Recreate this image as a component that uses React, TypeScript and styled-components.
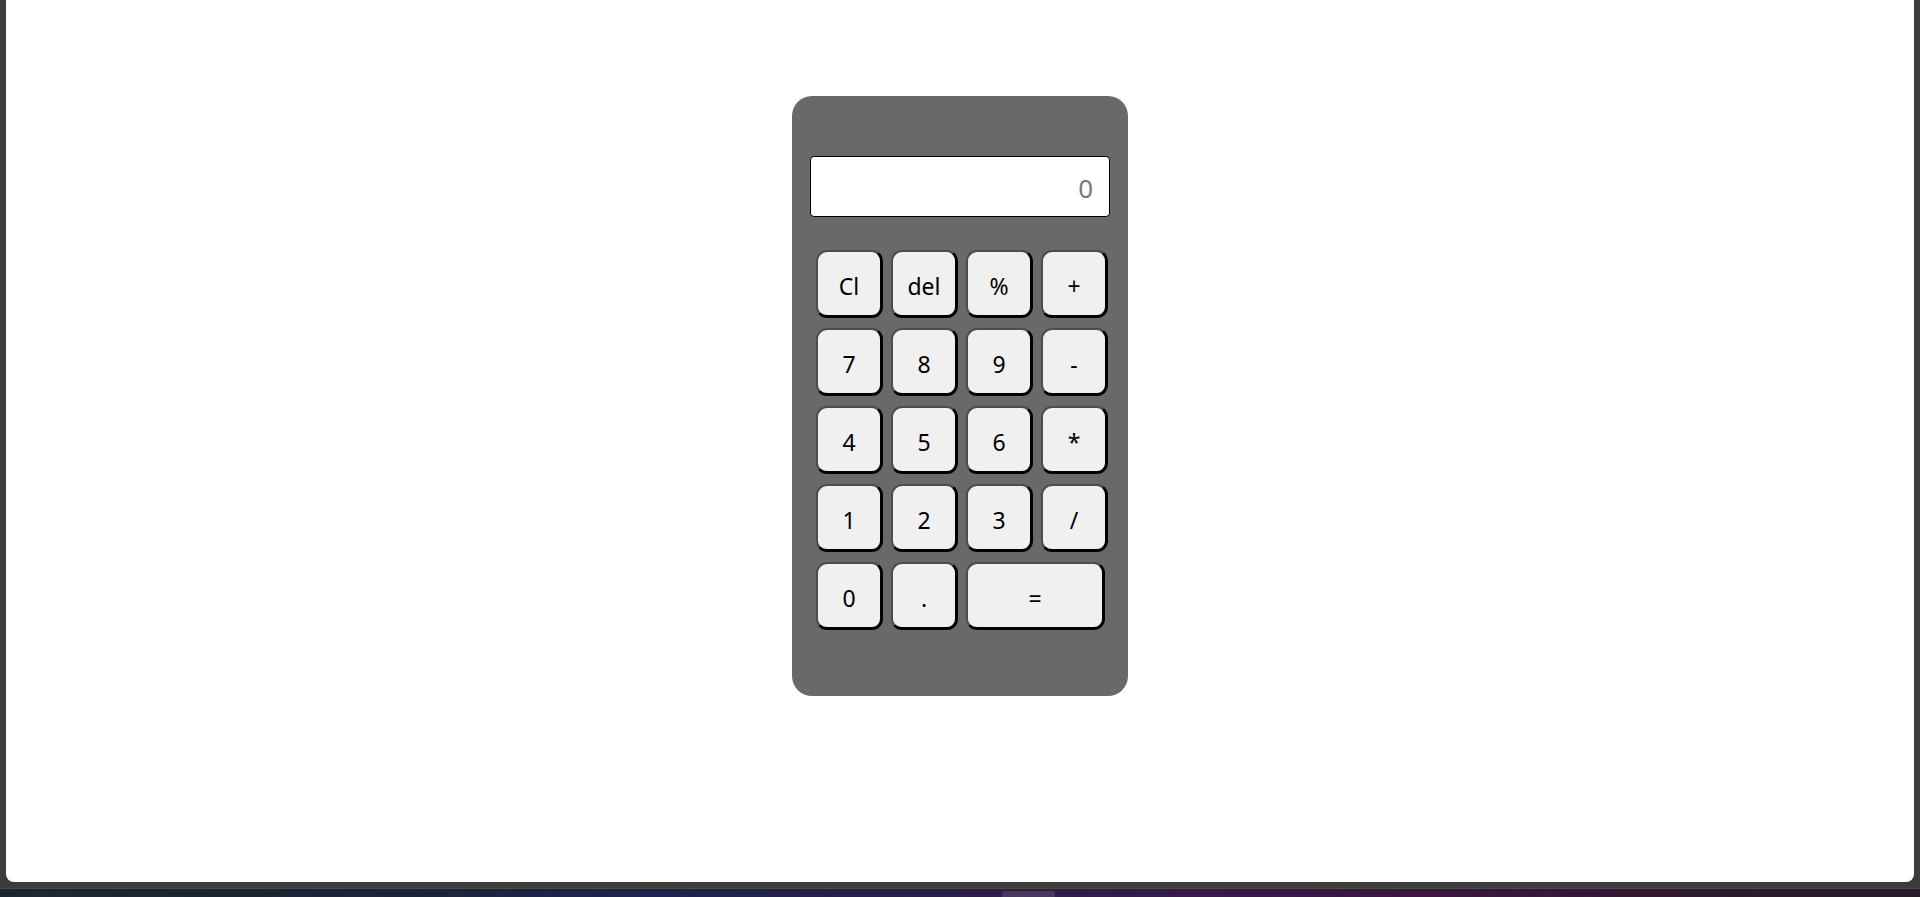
import React from "react";
import styled, { createGlobalStyle } from "styled-components";

const GlobalStyle = createGlobalStyle`
  html, body {
    margin: 0;
    padding: 0;
    background: #3b3b3b;
    overflow: hidden;
  }
  * { box-sizing: border-box; }
`;

const Frame = styled.div`
  width: 1920px;
  height: 897px;
  display: flex;
  flex-direction: column;
  background: #3b3b3b;
`;

const Page = styled.main`
  height: 882px;
  margin: 0 6px;
  background: #ffffff;
  border-radius: 0 0 8px 8px;
  display: flex;
  justify-content: center;
  align-items: flex-start;
  padding-top: 96px;
`;

const Gutter = styled.div`
  height: 7px;
  background: #3c3c3c;
  border-bottom: 1px solid #4a4a4a;
`;

const Taskbar = styled.footer`
  flex: 1;
  display: flex;
  align-items: flex-start;
  padding-left: 1002px;
  background: linear-gradient(
    90deg,
    #1b2730 0%,
    #1b2538 22%,
    #1c2350 34%,
    #2a1f48 48%,
    #361a48 62%,
    #3c1640 74%,
    #2e1a2e 90%,
    #261c26 100%
  );
`;

const TaskItem = styled.div`
  width: 53px;
  height: 6px;
  margin-top: 2px;
  border-radius: 3px 3px 0 0;
  background: rgba(255, 255, 255, 0.12);
`;

const Calculator = styled.div`
  width: 336px;
  background: #696969;
  border-radius: 20px;
  padding: 60px 18px 66px;
  display: flex;
  flex-direction: column;
  gap: 33px;
`;

const Display = styled.input`
  width: 300px;
  height: 61px;
  border: 1px solid #000;
  border-radius: 4px;
  background: #fff;
  text-align: right;
  padding: 3px 16px 0 10px;
  font-family: "Noto Sans", "Open Sans", sans-serif;
  font-size: 26px;
  color: #000;
  outline: none;
  &::placeholder {
    color: #6f7a85;
    opacity: 1;
  }
`;

const Keypad = styled.div`
  display: grid;
  grid-template-columns: repeat(4, 67px);
  grid-auto-rows: 68px;
  column-gap: 8px;
  row-gap: 10px;
  padding-left: 6px;
`;

const Key = styled.button<{ $wide?: boolean }>`
  grid-column: ${(p) => (p.$wide ? "span 2" : "auto")};
  width: ${(p) => (p.$wide ? "139px" : "67px")};
  height: 68px;
  margin: 0;
  padding: 5px 0 0;
  background: #f0f0f0;
  border-style: solid;
  border-width: 2px 3px 3px 2px;
  border-color: #4d4d4d #000 #000 #4d4d4d;
  border-radius: 11px;
  font-family: "Noto Sans", "Open Sans", sans-serif;
  font-size: 23px;
  color: #000;
  cursor: pointer;
  display: flex;
  align-items: center;
  justify-content: center;
  line-height: 1;
`;

const keys: { label: string; wide?: boolean }[] = [
  { label: "Cl" },
  { label: "del" },
  { label: "%" },
  { label: "+" },
  { label: "7" },
  { label: "8" },
  { label: "9" },
  { label: "-" },
  { label: "4" },
  { label: "5" },
  { label: "6" },
  { label: "*" },
  { label: "1" },
  { label: "2" },
  { label: "3" },
  { label: "/" },
  { label: "0" },
  { label: "." },
  { label: "=", wide: true },
];

export default function App() {
  return (
    <>
      <GlobalStyle />
      <Frame>
        <Page>
          <Calculator>
            <Display type="text" placeholder="0" readOnly />
            <Keypad>
              {keys.map((k) => (
                <Key key={k.label} $wide={k.wide}>
                  {k.label}
                </Key>
              ))}
            </Keypad>
          </Calculator>
        </Page>
        <Gutter />
        <Taskbar>
          <TaskItem />
        </Taskbar>
      </Frame>
    </>
  );
}
